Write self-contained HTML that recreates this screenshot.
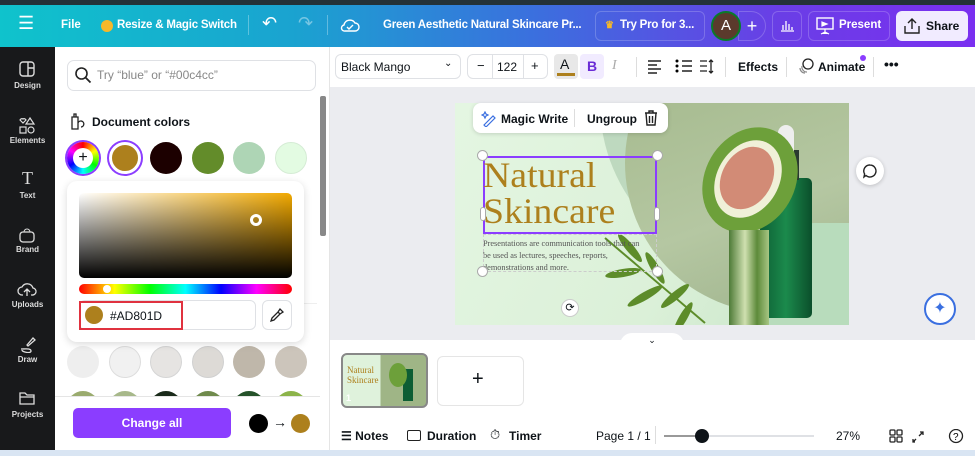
<!DOCTYPE html>
<html><head><meta charset="utf-8"><style>
*{margin:0;padding:0;box-sizing:border-box}
body{width:975px;height:456px;overflow:hidden;font-family:"Liberation Sans",sans-serif;background:#fff;position:relative;font-size:12px;color:#0e1318}
.a{position:absolute}
.top{left:0;top:0;width:975px;height:47px;background:linear-gradient(90deg,#0fc3cc 0%,#1aa3d0 30%,#3b6fde 55%,#6a3ee6 80%,#7a2ff0 100%);border-top:5px solid #243238}
.tw{color:#fff;font-weight:bold;font-size:11.5px;top:19px;white-space:nowrap}
.side{left:0;top:47px;width:55px;height:403px;background:#18191b}
.si{color:#ddd;font-size:8px;font-weight:bold;width:55px;text-align:center}
.sw{border-radius:50%;width:32px;height:32px}
.btn{border:1px solid #dfe1e5;border-radius:6px;background:#fff}
</style></head><body>
<div class="a top"></div>
<div class="a tw" style="left:18px;font-size:18px;top:13px;font-weight:normal">☰</div>
<div class="a tw" style="left:61px">File</div>
<div class="a" style="left:101px;top:20px;width:12px;height:12px;border-radius:50%;background:#f5b82a"></div>
<div class="a tw" style="left:117px;letter-spacing:-.2px">Resize &amp; Magic Switch</div>
<div class="a" style="left:248px;top:15px;width:1px;height:20px;background:rgba(255,255,255,.3)"></div>
<div class="a tw" style="left:262px;font-size:18px;top:13px;font-weight:normal">↶</div>
<div class="a tw" style="left:298px;font-size:18px;top:13px;font-weight:normal;opacity:.4">↷</div>
<div class="a" style="left:327px;top:15px;width:1px;height:20px;background:rgba(255,255,255,.3)"></div>
<svg class="a" style="left:340px;top:17px" width="20" height="16"><path d="M5 14h10a4 4 0 0 0 0-8 6 6 0 0 0-11 2 3 3 0 0 0 1 6z M7 10l2 2 4-4" fill="none" stroke="#fff" stroke-width="1.4"/></svg>
<div class="a tw" style="left:383px;letter-spacing:-.2px">Green Aesthetic Natural Skincare Pr...</div>
<div class="a" style="left:595px;top:11px;width:110px;height:30px;border:1px solid rgba(255,255,255,.2);border-radius:6px"></div>
<div class="a tw" style="left:605px;font-size:10px;top:20px;color:#f5b82a">♛</div>
<div class="a tw" style="left:620px;letter-spacing:-.2px">Try Pro for 3...</div>
<div class="a" style="left:738px;top:11px;width:28px;height:30px;border:1px solid rgba(255,255,255,.2);border-radius:0 15px 15px 0;color:#fff;font-size:18px;text-align:center;line-height:28px">+</div>
<div class="a" style="left:711px;top:11px;width:30px;height:30px;border-radius:50%;background:#5b3a2c;border:2px solid #0a7a2a;color:#fff;font-size:15px;text-align:center;line-height:26px">A</div>
<div class="a" style="left:772px;top:11px;width:30px;height:30px;border:1px solid rgba(255,255,255,.2);border-radius:6px"></div>
<svg class="a" style="left:779px;top:17px" width="16" height="16"><path d="M2 14h13M4 13V8M7 13V4M10 13V7M13 13V10" stroke="#fff" stroke-width="1.3"/></svg>
<div class="a" style="left:808px;top:11px;width:82px;height:30px;border:1px solid rgba(255,255,255,.2);border-radius:6px"></div>
<svg class="a" style="left:815px;top:16px" width="20" height="20"><rect x="2" y="2" width="16" height="11" fill="none" stroke="#fff" stroke-width="1.4"/><path d="M7 6l5 2-5 2z M10 13v3M6 18l4-2 4 2" fill="#fff" stroke="#fff" stroke-width="1.2"/></svg>
<div class="a tw" style="left:839px">Present</div>
<div class="a" style="left:896px;top:11px;width:72px;height:30px;background:#f1ebff;border-radius:6px"></div>
<svg class="a" style="left:903px;top:17px" width="18" height="18"><path d="M2 9v7h14V9 M9 12V2 M5 6l4-4 4 4" fill="none" stroke="#222" stroke-width="1.4"/></svg>
<div class="a" style="left:926px;top:19px;font-weight:bold;font-size:12px">Share</div>

<div class="a side"></div>
<svg class="a" style="left:19px;top:61px" width="16" height="16"><rect x="1" y="1" width="14" height="14" rx="3" fill="none" stroke="#ddd" stroke-width="1.4"/><path d="M9 1v14M9 7h6" stroke="#ddd" stroke-width="1.4"/></svg>
<div class="a si" style="top:81px">Design</div>
<svg class="a" style="left:18px;top:116px" width="18" height="18"><path d="M2 4a2 2 0 0 1 3-1 2 2 0 0 1 3 1l-3 3z M12 2l4 6h-8z" fill="none" stroke="#ddd" stroke-width="1.2"/><rect x="2" y="11" width="6" height="6" fill="none" stroke="#ddd" stroke-width="1.2"/><circle cx="13" cy="14" r="3" fill="none" stroke="#ddd" stroke-width="1.2"/></svg>
<div class="a si" style="top:136px">Elements</div>
<div class="a si" style="top:168px;font-size:18px;font-weight:normal;font-family:'Liberation Serif',serif">T</div>
<div class="a si" style="top:191px">Text</div>
<svg class="a" style="left:18px;top:226px" width="18" height="18"><rect x="2" y="6" width="14" height="10" rx="3" fill="none" stroke="#ddd" stroke-width="1.3"/><path d="M6 6a3 3 0 0 1 6 0" fill="none" stroke="#ddd"/></svg>
<div class="a si" style="top:245px">Brand</div>
<svg class="a" style="left:17px;top:280px" width="20" height="18"><path d="M6 15H5a4 4 0 0 1 0-8 6 6 0 0 1 11 1 3 3 0 0 1-1 7h-1M10 16V9M7 12l3-3 3 3" fill="none" stroke="#ddd" stroke-width="1.3"/></svg>
<div class="a si" style="top:300px">Uploads</div>
<svg class="a" style="left:18px;top:335px" width="18" height="18"><path d="M3 14c4 0 10-1 10 2s-9 1-9-1M9 10l6-7 2 2-7 6z" fill="none" stroke="#ddd" stroke-width="1.3"/></svg>
<div class="a si" style="top:355px">Draw</div>
<svg class="a" style="left:19px;top:390px" width="16" height="16"><path d="M1 3h5l2 2h7v9H1z M1 7h14" fill="none" stroke="#ddd" stroke-width="1.3"/></svg>
<div class="a si" style="top:410px">Projects</div>

<div class="a" style="left:55px;top:47px;width:275px;height:403px;background:#fff;border-right:1px solid #e5e5e5"></div>
<div class="a btn" style="left:67px;top:60px;width:249px;height:31px;border-radius:7px"></div>
<svg class="a" style="left:74px;top:66px" width="18" height="18"><circle cx="7.5" cy="7.5" r="5.5" fill="none" stroke="#222" stroke-width="1.6"/><path d="M11.5 11.5l5 5" stroke="#222" stroke-width="1.8"/></svg>
<div class="a" style="left:97px;top:68px;color:#888;font-size:12px">Try “blue” or “#00c4cc”</div>
<div class="a" style="left:320px;top:96px;width:6px;height:140px;background:#888;border-radius:2px"></div>
<svg class="a" style="left:69px;top:113px" width="16" height="18"><path d="M3 4h6v12H3z M5 4V1h2v3 M9 10a3 3 0 1 1 3 4" fill="none" stroke="#222" stroke-width="1.3"/></svg>
<div class="a" style="left:92px;top:115px;font-weight:bold;font-size:12px">Document colors</div>
<div class="a sw" style="left:67px;top:142px;background:conic-gradient(red,yellow,lime,cyan,blue,magenta,red);box-shadow:0 0 0 2px #8b3dff"></div>
<div class="a" style="left:73px;top:148px;width:20px;height:20px;border-radius:50%;background:#fff;text-align:center;line-height:19px;font-size:16px">+</div>
<div class="a sw" style="left:109px;top:142px;background:#ad801d;border:3px solid #fff;box-shadow:0 0 0 2px #8b3dff"></div>
<div class="a sw" style="left:150px;top:142px;background:#1c0000"></div>
<div class="a sw" style="left:192px;top:142px;background:#638c2a"></div>
<div class="a sw" style="left:233px;top:142px;background:#aed5b5"></div>
<div class="a sw" style="left:275px;top:142px;background:#e3fbe2;border:1px solid #d5ecd5"></div>
<div class="a" style="left:67px;top:303px;width:250px;height:1px;background:#eee"></div>
<div class="a sw" style="left:67px;top:346px;background:#eee"></div>
<div class="a sw" style="left:109px;top:346px;background:#f1f1f1;border:1px solid #ddd"></div>
<div class="a sw" style="left:150px;top:346px;background:#e6e4e2;border:1px solid #d5d5d5"></div>
<div class="a sw" style="left:192px;top:346px;background:#dddad6;border:1px solid #d0d0d0"></div>
<div class="a sw" style="left:233px;top:346px;background:#bfb7aa"></div>
<div class="a sw" style="left:275px;top:346px;background:#ccc5bb"></div>
<div class="a" style="left:67px;top:391px;width:250px;height:6px;overflow:hidden">
<div class="a sw" style="left:0;top:0;background:#9aab6e"></div><div class="a sw" style="left:42px;top:0;background:#a7b88a"></div><div class="a sw" style="left:83px;top:0;background:#1a2a1a"></div><div class="a sw" style="left:125px;top:0;background:#6f8a4c"></div><div class="a sw" style="left:166px;top:0;background:#25522a"></div><div class="a sw" style="left:208px;top:0;background:#8cb44a"></div></div>
<div class="a" style="left:55px;top:396px;width:265px;height:1px;background:#e5e5e5"></div>
<div class="a" style="left:67px;top:181px;width:237px;height:161px;background:#fff;border-radius:10px;box-shadow:0 2px 8px rgba(0,0,0,.15)"></div>
<div class="a" style="left:79px;top:193px;width:213px;height:85px;border-radius:5px;background:linear-gradient(to bottom,rgba(0,0,0,0),#000),linear-gradient(to right,#fff,#f2a900)"></div>
<div class="a" style="left:250px;top:214px;width:12px;height:12px;border-radius:50%;border:3px solid #fff"></div>
<div class="a" style="left:79px;top:284px;width:213px;height:10px;border-radius:5px;background:linear-gradient(90deg,red,#ff0,lime,cyan,blue,magenta,red)"></div>
<div class="a" style="left:103px;top:285px;width:8px;height:8px;border-radius:50%;background:#fff"></div>
<div class="a btn" style="left:79px;top:300px;width:177px;height:30px"></div>
<div class="a" style="left:79px;top:301px;width:104px;height:29px;border:2px solid #e0323f"></div>
<div class="a" style="left:85px;top:306px;width:18px;height:18px;border-radius:50%;background:#ad801d"></div>
<div class="a" style="left:110px;top:309px;font-size:12px">#AD801D</div>
<div class="a btn" style="left:262px;top:300px;width:30px;height:30px"></div>
<svg class="a" style="left:269px;top:307px" width="16" height="16"><path d="M2 14l1-3 6-6 2 2-6 6z M9 5l2-3 3 3-3 2" fill="none" stroke="#222" stroke-width="1.3"/></svg>
<div class="a" style="left:73px;top:408px;width:158px;height:30px;background:#8b3dff;border-radius:5px;color:#fff;font-weight:bold;text-align:center;line-height:30px">Change all</div>
<div class="a" style="left:249px;top:414px;width:19px;height:19px;border-radius:50%;background:#000"></div>
<div class="a" style="left:273px;top:414px;font-size:14px">→</div>
<div class="a" style="left:291px;top:414px;width:19px;height:19px;border-radius:50%;background:#ad801d"></div>

<div class="a" style="left:330px;top:47px;width:645px;height:40px;background:#fff"></div>
<div class="a btn" style="left:335px;top:54px;width:126px;height:25px"></div>
<div class="a" style="left:341px;top:60px;font-size:12px">Black Mango</div>
<div class="a" style="left:444px;top:58px;font-size:10px">⌄</div>
<div class="a btn" style="left:467px;top:54px;width:81px;height:25px"></div>
<div class="a" style="left:477px;top:58px;font-size:13px">−</div>
<div class="a" style="left:492px;top:54px;width:1px;height:25px;background:#dfe1e5"></div>
<div class="a" style="left:497px;top:60px">122</div>
<div class="a" style="left:523px;top:54px;width:1px;height:25px;background:#dfe1e5"></div>
<div class="a" style="left:531px;top:58px;font-size:13px">+</div>
<div class="a" style="left:554px;top:54px;width:24px;height:25px;background:#e8e8e8;border-radius:4px"></div>
<div class="a" style="left:560px;top:56px;font-size:14px">A</div>
<div class="a" style="left:557px;top:73px;width:18px;height:3px;background:#ad801d"></div>
<div class="a" style="left:580px;top:54px;width:24px;height:25px;background:#f1ebff;border-radius:4px;color:#6a2bd6;font-weight:bold;font-size:14px;text-align:center;line-height:25px">B</div>
<div class="a" style="left:612px;top:58px;font-size:14px;font-style:italic;color:#aaa;font-family:'Liberation Serif',serif">I</div>
<div class="a" style="left:636px;top:57px;width:1px;height:20px;background:#ddd"></div>
<svg class="a" style="left:647px;top:59px" width="80" height="16"><path d="M1 2h13M1 6h9M1 10h13M1 14h9" stroke="#222" stroke-width="1.4"/><path d="M35 2h10M35 7h10M35 12h10" stroke="#222" stroke-width="1.4"/><circle cx="30" cy="2" r="1.5"/><circle cx="30" cy="7" r="1.5"/><circle cx="30" cy="12" r="1.5"/><path d="M53 2h7M53 7h7M53 12h7M64 1v13M62 3l2-2 2 2M62 12l2 2 2-2" fill="none" stroke="#222" stroke-width="1.3"/></svg>
<div class="a" style="left:725px;top:57px;width:1px;height:20px;background:#ddd"></div>
<div class="a" style="left:738px;top:60px;font-weight:bold">Effects</div>
<div class="a" style="left:786px;top:57px;width:1px;height:20px;background:#ddd"></div>
<svg class="a" style="left:798px;top:57px" width="18" height="18"><circle cx="10" cy="7" r="5" fill="none" stroke="#222" stroke-width="1.3"/><path d="M4 9a5 5 0 0 0 5 6M2 11a5 5 0 0 0 5 5" fill="none" stroke="#888" stroke-width="1.2"/></svg>
<div class="a" style="left:818px;top:60px;font-weight:bold">Animate</div>
<div class="a" style="left:860px;top:55px;width:6px;height:6px;border-radius:50%;background:#8b3dff"></div>
<div class="a" style="left:873px;top:57px;width:1px;height:20px;background:#ddd"></div>
<div class="a" style="left:884px;top:56px;font-weight:bold;font-size:14px">•••</div>

<div class="a" style="left:330px;top:87px;width:645px;height:253px;background:#ebecf0"></div>
<div class="a" style="left:455px;top:103px;width:394px;height:222px;background:linear-gradient(120deg,#e4f6e2,#dbf0d8 60%,#c5e3c6);overflow:hidden">
 <div class="a" style="left:145px;top:-170px;width:340px;height:340px;border-radius:50%;background:#a8c8ac;opacity:.6"></div>
 <div class="a" style="left:170px;top:-90px;width:300px;height:300px;border-radius:50%;background:linear-gradient(160deg,#9fb586,#b5c7a2 60%,#9aaf88)"></div>
 <div class="a" style="left:300px;top:120px;width:120px;height:120px;background:#b8dcbc;border-radius:50% 0 0 0"></div>
 <div class="a" style="left:305px;top:75px;width:52px;height:140px;background:linear-gradient(90deg,#0d5e34,#1b8a4c,#0b4f2b);border-radius:5px"></div>
 <div class="a" style="left:318px;top:47px;width:26px;height:30px;background:#2a3a30"></div>
 <div class="a" style="left:323px;top:22px;width:16px;height:28px;background:#eee;border-radius:8px 8px 2px 2px"></div>
 <div class="a" style="left:250px;top:22px;width:90px;height:110px;border-radius:50%;background:#6da03a;transform:rotate(30deg)"></div>
 <div class="a" style="left:262px;top:35px;width:62px;height:82px;border-radius:50%;background:#f0f0d8;transform:rotate(30deg)"></div>
 <div class="a" style="left:267px;top:42px;width:50px;height:66px;border-radius:50%;background:#d28b76;transform:rotate(30deg)"></div>
 <div class="a" style="left:274px;top:127px;width:40px;height:95px;background:linear-gradient(90deg,#4d7a36,#cfe0b0 40%,#5d8a3a 70%,#a7c683)"></div>
 <svg class="a" style="left:140px;top:115px" width="120" height="110"><path d="M10 20L110 105" stroke="#5d8c2a" stroke-width="2"/><g fill="#5d8c2a"><ellipse cx="35" cy="30" rx="18" ry="4" transform="rotate(50 35 30)"/><ellipse cx="28" cy="55" rx="18" ry="4" transform="rotate(-10 28 55)"/><ellipse cx="60" cy="50" rx="18" ry="4" transform="rotate(60 60 50)"/><ellipse cx="50" cy="78" rx="20" ry="4" transform="rotate(-30 50 78)"/><ellipse cx="80" cy="78" rx="18" ry="4" transform="rotate(-40 80 78)"/><ellipse cx="88" cy="100" rx="18" ry="4" transform="rotate(-60 88 100)"/></g></svg>
</div>
<div class="a" style="left:473px;top:103px;width:195px;height:30px;background:#fff;border-radius:8px;box-shadow:0 1px 4px rgba(0,0,0,.15)"></div>
<svg class="a" style="left:481px;top:111px" width="16" height="16"><path d="M3 14l9-9 2 2-9 9z M3 3l1-2 1 2 2 1-2 1-1 2-1-2-2-1z" fill="none" stroke="#3a6fe0" stroke-width="1.2"/></svg>
<div class="a" style="left:501px;top:112px;font-weight:bold;font-size:12px">Magic Write</div>
<div class="a" style="left:574px;top:109px;width:1px;height:18px;background:#ddd"></div>
<div class="a" style="left:587px;top:112px;font-weight:bold;font-size:12px">Ungroup</div>
<svg class="a" style="left:644px;top:110px" width="14" height="16"><path d="M1 3h12M5 3V1h4v2M2 3l1 12h8l1-12M5.5 6v7M8.5 6v7" fill="none" stroke="#222" stroke-width="1.4"/></svg>
<div class="a" style="left:483px;top:156px;width:174px;height:78px;border:2px solid #8b3dff"></div>
<div class="a" style="left:483px;top:157px;color:#ad801d;font-family:'Liberation Serif',serif;font-size:36px;line-height:36px;letter-spacing:0px;transform:scaleX(1.05);transform-origin:left">Natural<br>Skincare</div>
<div class="a" style="left:483px;top:238px;width:160px;color:#555;font-family:'Liberation Serif',serif;font-size:8.3px;line-height:12px">Presentations are communication tools that can be used as lectures, speeches, reports, demonstrations and more.</div>
<div class="a" style="left:483px;top:234px;width:174px;height:38px;border:1px dashed #ccc"></div>
<div class="a" style="left:477px;top:150px;width:11px;height:11px;border-radius:50%;background:#fff;border:1px solid #aaa"></div>
<div class="a" style="left:652px;top:150px;width:11px;height:11px;border-radius:50%;background:#fff;border:1px solid #aaa"></div>
<div class="a" style="left:477px;top:266px;width:11px;height:11px;border-radius:50%;background:#fff;border:1px solid #aaa"></div>
<div class="a" style="left:652px;top:266px;width:11px;height:11px;border-radius:50%;background:#fff;border:1px solid #aaa"></div>
<div class="a" style="left:480px;top:207px;width:6px;height:14px;border-radius:3px;background:#fff;border:1px solid #aaa"></div>
<div class="a" style="left:654px;top:207px;width:6px;height:14px;border-radius:3px;background:#fff;border:1px solid #aaa"></div>
<div class="a" style="left:561px;top:299px;width:18px;height:18px;border-radius:50%;background:#fff;border:1px solid #ccc;font-size:11px;text-align:center;line-height:16px">⟳</div>
<div class="a" style="left:856px;top:157px;width:28px;height:28px;border-radius:50%;background:#fff;box-shadow:0 1px 4px rgba(0,0,0,.2)"></div>
<svg class="a" style="left:862px;top:163px" width="16" height="16"><path d="M8 2a6 6 0 1 1-4 10.5L2 14l.6-3A6 6 0 0 1 8 2z" fill="none" stroke="#222" stroke-width="1.4"/></svg>
<div class="a" style="left:924px;top:293px;width:32px;height:32px;border-radius:50%;background:#fff;border:2px solid #3a6fe0;color:#3a6fe0;text-align:center;line-height:27px;font-size:16px">✦</div>
<div class="a" style="left:620px;top:333px;width:64px;height:12px;background:#fff;border-radius:12px 12px 0 0;text-align:center;font-size:9px;line-height:14px">⌄</div>

<div class="a" style="left:341px;top:353px;width:87px;height:55px;border-radius:6px;border:2px solid #888;background:linear-gradient(90deg,#dff2dc 45%,#9fb586 45%);overflow:hidden">
<div class="a" style="left:4px;top:10px;color:#ad801d;font-family:'Liberation Serif',serif;font-size:9px;line-height:10px">Natural<br>Skincare</div>
<div class="a" style="left:60px;top:14px;width:10px;height:32px;background:#0d5e34"></div>
<div class="a" style="left:46px;top:8px;width:18px;height:24px;border-radius:50%;background:#6da03a"></div>
<div class="a" style="left:3px;top:38px;color:#fff;font-size:9px;font-weight:bold">1</div></div>
<div class="a btn" style="left:437px;top:356px;width:87px;height:50px;border-color:#e5e5e5"></div>
<div class="a" style="left:472px;top:368px;font-size:20px;font-weight:normal">+</div>
<div class="a" style="left:341px;top:429px;font-weight:bold;font-size:12px">☰ Notes</div>
<div class="a" style="left:407px;top:430px;width:14px;height:11px;border:1.5px solid #222;border-radius:2px"></div>
<div class="a" style="left:427px;top:429px;font-weight:bold;font-size:12px">Duration</div>
<div class="a" style="left:490px;top:427px;font-size:13px">⏱</div>
<div class="a" style="left:509px;top:429px;font-weight:bold;font-size:12px">Timer</div>
<div class="a" style="left:596px;top:429px;font-size:12px">Page 1 / 1</div>
<div class="a" style="left:655px;top:426px;width:1px;height:18px;background:#ddd"></div>
<div class="a" style="left:664px;top:435px;width:150px;height:2px;background:#dfe1e5"></div>
<div class="a" style="left:664px;top:435px;width:38px;height:2px;background:#999"></div>
<div class="a" style="left:695px;top:429px;width:14px;height:14px;border-radius:50%;background:#0e1318"></div>
<div class="a" style="left:836px;top:429px;font-size:12px">27%</div>
<svg class="a" style="left:889px;top:429px" width="80" height="16"><g fill="none" stroke="#222" stroke-width="1.3"><rect x="1" y="1" width="5" height="5" rx="1"/><rect x="8" y="1" width="5" height="5" rx="1"/><rect x="1" y="8" width="5" height="5" rx="1"/><rect x="8" y="8" width="5" height="5" rx="1"/><path d="M31 3h3v3M34 3l-4 4M26 13h-2v-3M24 13l3-3"/><circle cx="67" cy="7" r="6.5"/></g><text x="64" y="11" font-size="10" font-family="Liberation Sans">?</text></svg>
<div class="a" style="left:0;top:450px;width:975px;height:6px;background:#d9e5f3"></div>
</body></html>
